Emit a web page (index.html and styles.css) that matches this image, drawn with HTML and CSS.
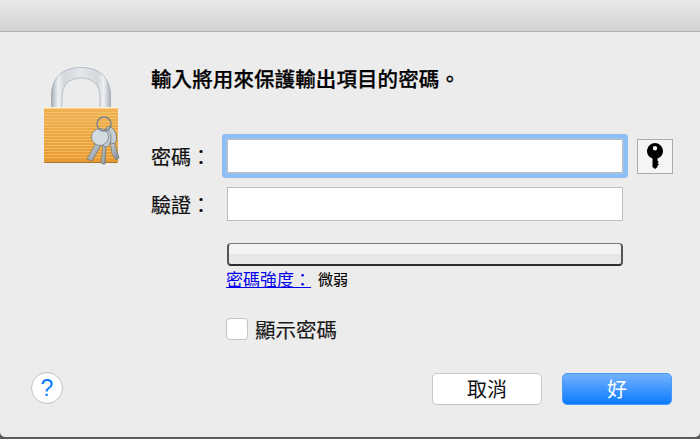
FILE: index.html
```html
<!DOCTYPE html>
<html lang="zh-Hant">
<head>
<meta charset="utf-8">
<title>輸入密碼</title>
<link rel="stylesheet" href="styles.css">
</head>
<body>
<div class="window">
  <div class="titlebar"></div>
  <div class="dialog">
    <div class="head">
      <svg class="lock" width="76" height="98" viewBox="0 0 76 98">
        <defs>
          <linearGradient id="sh" x1="0" x2="1" y1="0" y2="0">
            <stop offset="0" stop-color="#a3aab3"/><stop offset=".05" stop-color="#c2c8cf"/><stop offset=".12" stop-color="#eff1f3"/><stop offset=".22" stop-color="#d3d8dd"/><stop offset=".5" stop-color="#e4e7ea"/><stop offset=".78" stop-color="#d3d8dd"/><stop offset=".88" stop-color="#eff1f3"/><stop offset=".95" stop-color="#c2c8cf"/><stop offset="1" stop-color="#a3aab3"/>
          </linearGradient>
          <linearGradient id="bd" x1="0" x2="0" y1="0" y2="1">
            <stop offset="0" stop-color="#f0b254"/><stop offset=".5" stop-color="#eca742"/><stop offset="1" stop-color="#e79a30"/>
          </linearGradient>
          <linearGradient id="kg" x1="0" x2="1" y1="0" y2="1">
            <stop offset="0" stop-color="#d5dde2"/><stop offset="1" stop-color="#7f8990"/>
          </linearGradient>
          <pattern id="st" width="4" height="3" patternUnits="userSpaceOnUse">
            <rect width="4" height="1" fill="#fbcf85" fill-opacity=".55"/>
          </pattern>
        </defs>
        <path d="M7 41V30C7 11 18 0 37 0s30 11 30 30v11H56V30C56 18 49 11 37 11S18 18 18 30v11z" fill="url(#sh)"/>
        <path d="M7.500 41V30C7.500 11 18 .5 37 .5S66.500 11 66.500 30v11" fill="none" stroke="#a6adb5" stroke-width=".7"/>
        <path d="M18 41V30C18 18 25 11 37 11s19 7 19 19v11" fill="none" stroke="#a6adb5" stroke-width=".7"/>
        <rect x="0" y="40" width="74" height="56" rx="1.500" fill="#a9752c"/>
        <rect x="0" y="40" width="74" height="55" rx="1" fill="url(#bd)"/>
        <rect x="0" y="43" width="74" height="49" fill="url(#st)"/>
        <rect x="0" y="40" width="74" height="1.500" fill="#fdf1d6"/>
        <g stroke="#6a7279" stroke-width=".7" fill="url(#kg)">
          <path d="M66 72l3-1 6 20-3 2-3-5-1-1z"/>
          <ellipse cx="67" cy="68" rx="5" ry="9" transform="rotate(-20 67 68)" fill="#c6ced4"/>
          <path d="M59 76l3 1-1 20h-3l-1-4 1-3z"/>
          <ellipse cx="62" cy="71" rx="5" ry="9" fill="#c6ced4"/>
          <path d="M52 76l5 2-9 16-5-2 4-7z"/>
          <circle cx="56" cy="70" r="8.500" fill="#d2dbe0"/>
        </g>
        <circle cx="60" cy="57" r="7" fill="none" stroke="#7b8389" stroke-width="1.500"/>
      </svg>
      <h1 class="title">輸入將用來保護輸出項目的密碼。</h1>
    </div>
    <div class="form">
      <div class="row row-first">
        <label class="label">密碼：</label>
        <div class="field field-focus"></div>
        <button class="keybtn" type="button" aria-label="密碼輔助程式">
          <svg width="16" height="26" viewBox="0 0 16 26"><path fill="#000" fill-rule="evenodd" d="M8 0a8 8 0 0 1 2.500 15.600V18l1.500 1-1.500 1 1.500 1.500-1.500 1V24L8 26 5.500 24V15.600A8 8 0 0 1 8 0zm0 3a2.200 2.200 0 1 0 0 4.400A2.200 2.200 0 0 0 8 3z"/></svg>
        </button>
      </div>
      <div class="row row-second">
        <label class="label">驗證：</label>
        <div class="field"></div>
      </div>
      <div class="meter"></div>
      <div class="strength"><a class="strength-link" href="#">密碼強度：</a><span class="strength-value">微弱</span></div>
      <div class="show"><span class="checkbox"></span><span class="show-label">顯示密碼</span></div>
    </div>
    <div class="footer">
      <button class="help" type="button">?</button>
      <div class="actions">
        <button class="btn" type="button">取消</button>
        <button class="btn btn-primary" type="button">好</button>
      </div>
    </div>
  </div>
</div>
</body>
</html>
```
FILE: styles.css
```css
* { box-sizing: border-box; }
html, body { margin: 0; padding: 0; height: 100%; overflow: hidden; }
body {
  background: #5b5b5d;
  font-family: "Noto Sans CJK TC", "Liberation Sans", sans-serif;
  color: #000;
}
.window { width: 700px; height: 437px; display: flex; flex-direction: column; }
.titlebar {
  height: 32px;
  background: linear-gradient(#e9e7e9, #d2d0d2);
  border-bottom: 1px solid #b3b1b3;
  flex: none;
}
.dialog {
  flex: 1;
  background: #ececec;
  border-bottom-left-radius: 5px;
  border-bottom-right-radius: 5px;
  padding: 35px 28px 0 31px;
  display: flex;
  flex-direction: column;
}
.head { display: flex; align-items: flex-start; margin-left: 13px; height: 98px; }
.lock { flex: none; margin-right: 32px; }
.title {
  margin: 0 0 0 -1px;
  font-size: 20.500px;
  line-height: 22px;
  font-weight: 500;
  letter-spacing: .1px;
  -webkit-text-stroke: .25px #000;
}
.form { margin-left: 121px; margin-top: -26px; }
.row { display: flex; align-items: center; }
.row-first { height: 34px; }
.row-second { height: 34px; margin-top: 14px; }
.label {
  width: 76px;
  margin-left: -1px;
  padding-top: 1px;
  flex: none;
  font-size: 20px;
  line-height: 28px;
  color: #111;
  -webkit-text-stroke: .2px #111;
}
.field {
  width: 396px;
  height: 34px;
  flex: none;
  background: #fff;
  border: 1px solid #bdbdbd;
}
.field-focus {
  box-shadow: 0 0 0 1px #9ac3f2, 0 0 0 5px #8fbef3;
  border-radius: 1px;
}
.keybtn {
  width: 36px;
  height: 35px;
  margin-left: 14px;
  flex: none;
  padding: 0;
  background: #f5f5f5;
  border: 1px solid #ababab;
  display: flex;
  align-items: center;
  justify-content: center;
}
.meter {
  width: 396px;
  height: 23px;
  margin: 22px 0 0 75px;
  border-radius: 4px;
  border-style: solid;
  border-width: 1px 2px 2px;
  border-color: #7a7a7a #555 #2e2e2e;
  background: linear-gradient(#f3f3f3 0, #f3f3f3 50%, #e6e6e6 50%, #e9e9e9 100%);
}
.strength { margin: 1px 0 0 74px; display: flex; align-items: center; height: 24px; }
.strength-link { font-size: 17px; line-height: 22px; color: #0000ee; }
.strength-value { font-size: 15px; line-height: 22px; margin-left: 7px; -webkit-text-stroke: .15px #000; }
.show { margin: 26px 0 0 74px; display: flex; align-items: center; height: 24px; }
.checkbox {
  width: 22px;
  height: 22px;
  border-radius: 4px;
  background: #fff;
  border: 1px solid #c4c4c4;
  flex: none;
}
.show-label { margin-left: 7px; font-size: 20.500px; line-height: 26px; color: #1a1a1a; -webkit-text-stroke: .15px #1a1a1a; }
.footer { display: flex; justify-content: space-between; align-items: flex-start; margin-top: 31px; }
.help {
  width: 32px;
  height: 32px;
  padding: 0;
  border-radius: 50%;
  background: #fff;
  border: 1px solid #c2c2c2;
  color: #0a7bff;
  font-family: "Liberation Sans", sans-serif;
  font-size: 23px;
  line-height: 28px;
  text-align: center;
}
.actions { display: flex; gap: 20px; margin-top: 1px; }
.btn {
  width: 110px;
  height: 32px;
  padding: 0;
  border-radius: 5px;
  background: #fff;
  border: 1px solid #c6c6c6;
  font-family: "Noto Sans CJK TC", sans-serif;
  font-size: 20px;
  line-height: 28px;
  color: #111;
}
.btn-primary {
  background: linear-gradient(#72b1fc, #0b7bff);
  border-color: #4a98f8;
  color: #fff;
}
```
